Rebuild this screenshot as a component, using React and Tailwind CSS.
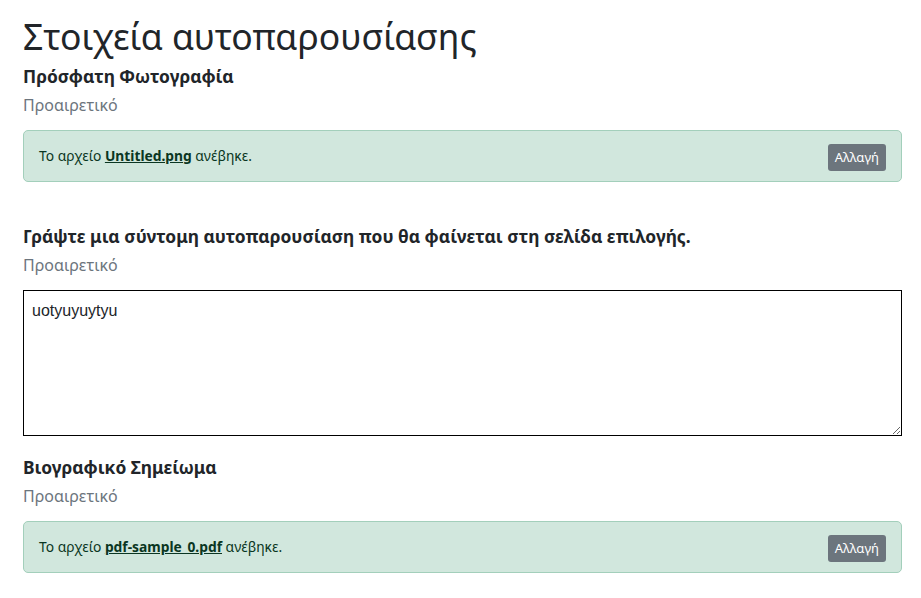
export default function App() {
  const font = { fontFamily: '"Noto Sans", "Open Sans", sans-serif' };
  const Alert = ({ file }) => (
    <div className="flex items-center justify-between rounded-[5px] border border-[#a3cfbb] bg-[#d1e7dd] h-[52px] pl-[15px] pr-[15px]">
      <div className="text-[13.8px] text-[#0a3622]">
        Το αρχείο{" "}
        <a className="font-bold underline text-[#0a3622]">{file}</a>{" "}
        ανέβηκε.
      </div>
      <button className="mt-[3px] h-[27px] px-[7px] rounded-[3px] bg-[#6c757d] text-white text-[13px] leading-none">
        Αλλαγή
      </button>
    </div>
  );
  return (
    <div className="bg-white min-h-[598px] pl-[23px] pr-[19px] pt-[12px] text-[#212529]" style={font}>
      <h1 className="text-[35.5px] leading-[48px] font-normal">Στοιχεία αυτοπαρουσίασης</h1>
      <div className="text-[17.4px] font-bold leading-[24px] mt-[4px]">Πρόσφατη Φωτογραφία</div>
      <div className="text-[16px] text-[#6c757d] leading-[24px] mt-[5px]">Προαιρετικό</div>
      <div className="mt-[13px]">
        <Alert file="Untitled.png" />
      </div>
      <div className="text-[17.4px] font-bold leading-[24px] mt-[42px]">
        Γράψτε μια σύντομη αυτοπαρουσίαση που θα φαίνεται στη σελίδα επιλογής.
      </div>
      <div className="text-[16px] text-[#6c757d] leading-[24px] mt-[5px]">Προαιρετικό</div>
      <textarea
        className="block mt-[13px] w-full h-[146px] border border-black px-[8px] py-[8px] text-[16px] text-[#212529] outline-none"
        style={{ fontFamily: '"Liberation Sans", Arial, sans-serif' }}
        defaultValue="uotyuyuytyu"
      />
      <div className="text-[17.4px] font-bold leading-[24px] mt-[19px]">Βιογραφικό Σημείωμα</div>
      <div className="text-[16px] text-[#6c757d] leading-[24px] mt-[5px]">Προαιρετικό</div>
      <div className="mt-[13px]">
        <Alert file="pdf-sample_0.pdf" />
      </div>
    </div>
  );
}
